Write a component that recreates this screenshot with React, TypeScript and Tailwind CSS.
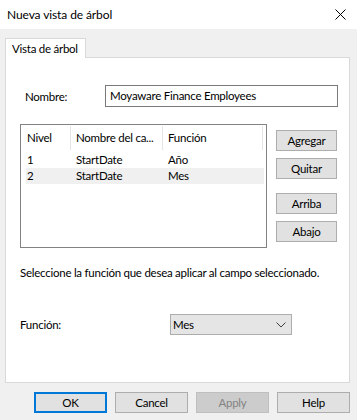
import React from "react";

const font = { fontFamily: 'Lato, "Noto Sans", sans-serif' };

function Btn({ label, className = "" }: { label: string; className?: string }) {
  return (
    <div
      className={`flex items-center justify-center border border-[#adadad] bg-[#e1e1e1] text-black ${className}`}
    >
      {label}
    </div>
  );
}

export default function App() {
  return (
    <div
      className="w-[357px] h-[420px] bg-[#f0f0f0] flex flex-col overflow-hidden text-[11.5px] tracking-[-0.25px] text-black leading-[16px] whitespace-nowrap"
      style={font}
    >
      {/* Title bar */}
      <div className="h-[29px] bg-white flex items-center justify-between pl-[7px] pr-[8px] shrink-0">
        <span className="text-[12px] tracking-[-0.1px]">Nueva vista de árbol</span>
        <svg width="11" height="11" viewBox="0 0 11 11" className="mr-[3px]">
          <path d="M0.5 0.5 L10.5 10.5 M10.5 0.5 L0.5 10.5" stroke="#000" strokeWidth="1" />
        </svg>
      </div>

      {/* Body */}
      <div className="flex flex-col pl-[5px] pr-[7px] pt-[8px]">
        {/* Tab */}
        <div className="flex">
          <div className="w-[81px] h-[20px] bg-white border border-b-0 border-[#d9d9d9] pl-[6px] flex items-center relative top-[1px] z-10">
            Vista de árbol
          </div>
        </div>
        {/* Panel */}
        <div className="h-[326px] bg-white border border-[#d9d9d9] flex flex-col pt-[27px] pl-[14px]">
          {/* Nombre row */}
          <div className="flex items-center h-[22px]">
            <span className="w-[85px] pl-[5px] pt-[2px]">Nombre:</span>
            <div className="w-[233px] h-[22px] border border-[#7a7a7a] pl-[4px] flex items-start pt-[2px]">
              Moyaware Finance Employees
            </div>
          </div>

          {/* List + buttons */}
          <div className="flex mt-[17px]">
            <div className="w-[247px] h-[124px] border border-[#828282] flex flex-col">
              {/* header */}
              <div className="flex h-[26px] pt-[1px] pb-[1px]">
                <div className="w-[50px] pl-[6px] flex items-center border-r border-[#e5e5e5]">Nivel</div>
                <div className="w-[92px] pl-[5px] flex items-center border-r border-[#e5e5e5]">Nombre del ca...</div>
                <div className="w-[100px] pl-[5px] flex items-center border-r border-[#e5e5e5]">Función</div>
              </div>
              <div className="flex flex-col pl-[5px]">
                <div className="flex h-[17px] items-center w-[238px]">
                  <span className="w-[50px] pl-[1px]">1</span>
                  <span className="w-[92px]">StartDate</span>
                  <span>Año</span>
                </div>
                <div className="flex h-[16px] items-center w-[238px] bg-[#f0f0f0]">
                  <span className="w-[50px] pl-[1px]">2</span>
                  <span className="w-[92px]">StartDate</span>
                  <span>Mes</span>
                </div>
              </div>
            </div>
            <div className="flex flex-col ml-[9px] pt-[6px]">
              <Btn label="Agregar" className="w-[61px] h-[21px]" />
              <Btn label="Quitar" className="w-[61px] h-[21px] mt-[7px]" />
              <Btn label="Arriba" className="w-[61px] h-[21px] mt-[14px]" />
              <Btn label="Abajo" className="w-[61px] h-[21px] mt-[7px]" />
            </div>
          </div>

          <div className="mt-[17px] h-[16px]">Seleccione la función que desea aplicar al campo seleccionado.</div>

          <div className="flex items-center mt-[33px]">
            <span className="w-[150px]">Función:</span>
            <div className="w-[122px] h-[21px] bg-[#e5e5e5] border border-[#adadad] flex items-center justify-between pl-[2px] pr-[5px]">
              <span>Mes</span>
              <svg width="10" height="6" viewBox="0 0 10 6">
                <path d="M0.5 0.5 L5 5 L9.5 0.5" stroke="#404040" strokeWidth="1" fill="none" />
              </svg>
            </div>
          </div>
        </div>

        {/* Bottom buttons */}
        <div className="flex justify-end gap-[8px] mt-[9px]">
          <div className="w-[73px] h-[21px] flex items-center justify-center border-2 border-[#0078d7] bg-[#e1e1e1]">OK</div>
          <Btn label="Cancel" className="w-[73px] h-[21px]" />
          <div className="w-[73px] h-[21px] flex items-center justify-center border border-[#bfbfbf] bg-[#cccccc] text-[#838383]">Apply</div>
          <Btn label="Help" className="w-[73px] h-[21px]" />
        </div>
      </div>
    </div>
  );
}
